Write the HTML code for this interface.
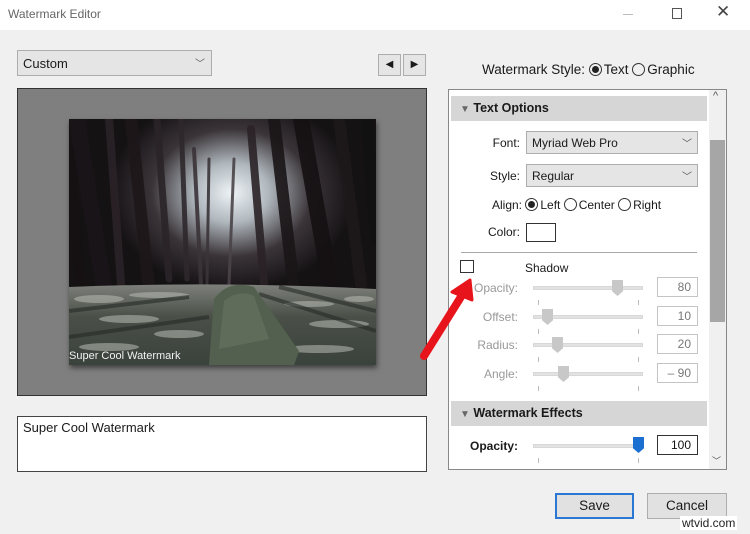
<!DOCTYPE html>
<html><head><meta charset="utf-8"><style>
*{box-sizing:border-box;margin:0;padding:0}
body{width:750px;height:534px;background:#f0f0f0;font-family:"Liberation Sans",sans-serif;font-size:12px;color:#1a1a1a;position:relative;overflow:hidden}
.a{position:absolute}
.title{left:0;top:0;width:750px;height:30px;background:#fff}
.dd{background:#e5e5e5;border:1px solid #adadad}
.hdr{background:#d6d6d6;font-weight:bold;font-size:12.5px}
.lbl{text-align:right;width:60px}
.vb{background:#fff;border:1px solid #c4c4c4;text-align:right;padding-right:6px;height:20px;line-height:18px;color:#777}
.trk{height:4px;background:#e2e2e2;border:1px solid #d8d8d8}
.th{width:11px;height:16px;background:#c8c8c8;clip-path:polygon(0 0,100% 0,100% 70%,50% 100%,0 70%)}
.tick{width:1px;height:5px;background:#bbb}
.rad{display:inline-block;width:13px;height:13px;border:1px solid #333;border-radius:50%;vertical-align:-2px;position:relative;margin-right:2px}
.gray{color:#999}
</style></head><body>
<div class="a title"></div>
<div class="a" style="left:8px;top:7px;font-size:12px;color:#666">Watermark Editor</div>
<div class="a" style="left:623px;top:14px;width:10px;height:1px;background:#bbb"></div>
<div class="a" style="left:672px;top:8px;width:10px;height:11px;border:1px solid #555"></div>
<div class="a" style="left:716px;top:2px;font-size:17px;color:#444">✕</div>

<div class="a dd" style="left:17px;top:50px;width:195px;height:26px;padding:5px 0 0 5px;font-size:13px">Custom<span style="position:absolute;right:6px;top:4px;font-size:10px;color:#555">﹀</span></div>
<div class="a dd" style="left:378px;top:54px;width:23px;height:22px;font-size:10px;text-align:center;line-height:20px">◀</div>
<div class="a dd" style="left:403px;top:54px;width:23px;height:22px;font-size:10px;text-align:center;line-height:20px">▶</div>
<div class="a" style="left:482px;top:62px;font-size:13.5px">Watermark Style: <span class="rad"><span class="a" style="left:2px;top:2px;width:7px;height:7px;border-radius:50%;background:#222"></span></span>Text <span class="rad"></span>Graphic</div>

<div class="a" style="left:17px;top:88px;width:410px;height:308px;background:#7f7f7f;border:1px solid #333"></div>
<div class="a" style="left:69px;top:119px;width:307px;height:246px;box-shadow:1px 3px 5px rgba(0,0,0,.5)">
<svg width="307" height="246" viewBox="0 0 307 246">
<defs>
<radialGradient id="sky" cx="0.53" cy="0.3" r="0.4"><stop offset="0" stop-color="#eef3f6"/><stop offset="0.3" stop-color="#b0b8be"/><stop offset="0.65" stop-color="#3a3438"/><stop offset="1" stop-color="#151214"/></radialGradient>
<linearGradient id="gr" x1="0" y1="0" x2="0" y2="1"><stop offset="0" stop-color="#7d807a"/><stop offset="0.4" stop-color="#4a5048"/><stop offset="1" stop-color="#3a423c"/></linearGradient>
</defs>
<rect width="307" height="246" fill="url(#sky)"/>
<g stroke-linecap="round" opacity="0.9">
<path d="M8 0 L35 170" stroke="#1a1518" stroke-width="16"/>
<path d="M40 0 L52 165" stroke="#2a2226" stroke-width="8"/>
<path d="M62 0 L80 170" stroke="#1d1719" stroke-width="12"/>
<path d="M88 0 L100 160" stroke="#2a2428" stroke-width="7"/>
<path d="M112 0 L118 160" stroke="#2e282c" stroke-width="5"/>
<path d="M125 30 L132 165" stroke="#3a3338" stroke-width="4"/>
<path d="M140 40 L138 165" stroke="#3a3438" stroke-width="3"/>
<path d="M165 40 L160 165" stroke="#4a4448" stroke-width="3"/>
<path d="M182 10 L195 165" stroke="#2a2226" stroke-width="8"/>
<path d="M205 0 L225 170" stroke="#1a1517" stroke-width="12"/>
<path d="M232 0 L262 170" stroke="#151113" stroke-width="16"/>
<path d="M270 0 L292 165" stroke="#1d181a" stroke-width="12"/>
<path d="M0 30 L12 170" stroke="#151113" stroke-width="10"/>
<path d="M298 0 L307 120" stroke="#111" stroke-width="12"/>
</g>
<path d="M0 168 Q150 162 307 170 L307 246 L0 246Z" fill="url(#gr)"/>
<g fill="#b8bcb4" opacity="0.55">
<ellipse cx="30" cy="180" rx="25" ry="4"/><ellipse cx="90" cy="176" rx="30" ry="3"/><ellipse cx="60" cy="200" rx="30" ry="4"/><ellipse cx="110" cy="215" rx="25" ry="4"/><ellipse cx="40" cy="228" rx="30" ry="4"/><ellipse cx="240" cy="185" rx="25" ry="3"/><ellipse cx="270" cy="205" rx="30" ry="4"/><ellipse cx="250" cy="230" rx="35" ry="4"/><ellipse cx="290" cy="180" rx="15" ry="3"/>
</g>
<g stroke="#262a26" stroke-width="4" opacity="0.6"><path d="M0 192 L120 178"/><path d="M0 218 L140 198"/><path d="M190 175 L307 212"/><path d="M210 168 L307 192"/></g>
<path d="M145 180 Q160 160 185 168 L230 232 L225 246 L140 246 Z" fill="#54604f"/>
<path d="M155 182 Q170 170 185 177 L200 220 L150 230Z" fill="#677560" opacity="0.6"/>
<text x="0" y="240" font-size="11" fill="#f2f2f2" font-family="Liberation Sans">Super Cool Watermark</text>
</svg></div>

<div class="a" style="left:17px;top:416px;width:410px;height:56px;background:#fff;border:1px solid #444;padding:3px 5px;font-size:13px">Super Cool Watermark</div>

<div class="a" style="left:448px;top:89px;width:279px;height:381px;background:#fff;border:1px solid #888"></div>
<div class="a" style="left:709px;top:90px;width:17px;height:379px;background:#f0f0f0"></div>
<div class="a" style="left:710px;top:140px;width:15px;height:182px;background:#a6a6a6"></div>
<div class="a" style="left:713px;top:90px;font-size:11px;color:#555">^</div>
<div class="a" style="left:712px;top:454px;font-size:9px;color:#555">﹀</div>

<svg class="a" style="left:410px;top:270px" width="70" height="100"><path d="M14 86 L54 22" stroke="#e8141b" stroke-width="8" stroke-linecap="round"/><path d="M60 10 L42 22 L62 30Z" fill="#e8141b" stroke="#e8141b" stroke-width="3" stroke-linejoin="round"/></svg>

<div class="a hdr" style="left:451px;top:96px;width:256px;height:25px;padding:5px 0 0 9px"><span style="color:#666;font-size:10px">▼</span> Text Options</div>
<div class="a lbl" style="left:460px;top:136px">Font:</div>
<div class="a dd" style="left:526px;top:131px;width:172px;height:23px;padding:4px 5px">Myriad Web Pro<span style="position:absolute;right:5px;top:3px;font-size:10px;color:#555">﹀</span></div>
<div class="a lbl" style="left:460px;top:169px">Style:</div>
<div class="a dd" style="left:526px;top:164px;width:172px;height:23px;padding:4px 5px">Regular<span style="position:absolute;right:5px;top:3px;font-size:10px;color:#555">﹀</span></div>
<div class="a" style="left:492px;top:198px">Align: <span class="rad"><span class="a" style="left:2px;top:2px;width:7px;height:7px;border-radius:50%;background:#222"></span></span>Left <span class="rad"></span>Center <span class="rad"></span>Right</div>
<div class="a lbl" style="left:460px;top:225px">Color:</div>
<div class="a" style="left:526px;top:223px;width:30px;height:19px;border:1px solid #333;background:#fff"></div>
<div class="a" style="left:461px;top:252px;width:236px;height:1px;background:#aaa"></div>
<div class="a" style="left:460px;top:260px;width:14px;height:13px;border:1px solid #333;background:#fff"></div>
<div class="a" style="left:525px;top:261px">Shadow</div>

<div class="a lbl gray" style="left:458px;top:281px">Opacity:</div>
<div class="a lbl gray" style="left:458px;top:310px">Offset:</div>
<div class="a lbl gray" style="left:458px;top:338px">Radius:</div>
<div class="a lbl gray" style="left:458px;top:367px">Angle:</div>
<div class="a trk" style="left:533px;top:286px;width:110px"></div>
<div class="a trk" style="left:533px;top:315px;width:110px"></div>
<div class="a trk" style="left:533px;top:343px;width:110px"></div>
<div class="a trk" style="left:533px;top:372px;width:110px"></div>
<div class="a th" style="left:612px;top:280px"></div>
<div class="a th" style="left:542px;top:309px"></div>
<div class="a th" style="left:552px;top:337px"></div>
<div class="a th" style="left:558px;top:366px"></div>
<div class="a tick" style="left:538px;top:300px"></div><div class="a tick" style="left:638px;top:300px"></div>
<div class="a tick" style="left:538px;top:329px"></div><div class="a tick" style="left:638px;top:329px"></div>
<div class="a tick" style="left:538px;top:357px"></div><div class="a tick" style="left:638px;top:357px"></div>
<div class="a tick" style="left:538px;top:386px"></div><div class="a tick" style="left:638px;top:386px"></div>
<div class="a vb" style="left:657px;top:277px;width:41px">80</div>
<div class="a vb" style="left:657px;top:306px;width:41px">10</div>
<div class="a vb" style="left:657px;top:334px;width:41px">20</div>
<div class="a vb" style="left:657px;top:363px;width:41px">– 90</div>

<div class="a hdr" style="left:451px;top:401px;width:256px;height:25px;padding:5px 0 0 9px"><span style="color:#666;font-size:10px">▼</span> Watermark Effects</div>
<div class="a lbl" style="left:458px;top:439px;font-weight:bold">Opacity:</div>
<div class="a trk" style="left:533px;top:444px;width:110px"></div>
<div class="a th" style="left:633px;top:437px;background:#1a6fd0"></div>
<div class="a tick" style="left:538px;top:458px"></div><div class="a tick" style="left:638px;top:458px"></div>
<div class="a vb" style="left:657px;top:435px;width:41px;border-color:#333;color:#111">100</div>

<div class="a" style="left:555px;top:493px;width:79px;height:26px;background:#e1e1e1;border:2px solid #2a78d3;text-align:center;line-height:22px;font-size:13.5px">Save</div>
<div class="a" style="left:647px;top:493px;width:80px;height:26px;background:#e1e1e1;border:1px solid #adadad;text-align:center;line-height:24px;font-size:13.5px">Cancel</div>
<div class="a" style="left:680px;top:516px;font-size:12px;color:#222;background:#fff;padding:0 2px">wtvid.com</div>
</body></html>
